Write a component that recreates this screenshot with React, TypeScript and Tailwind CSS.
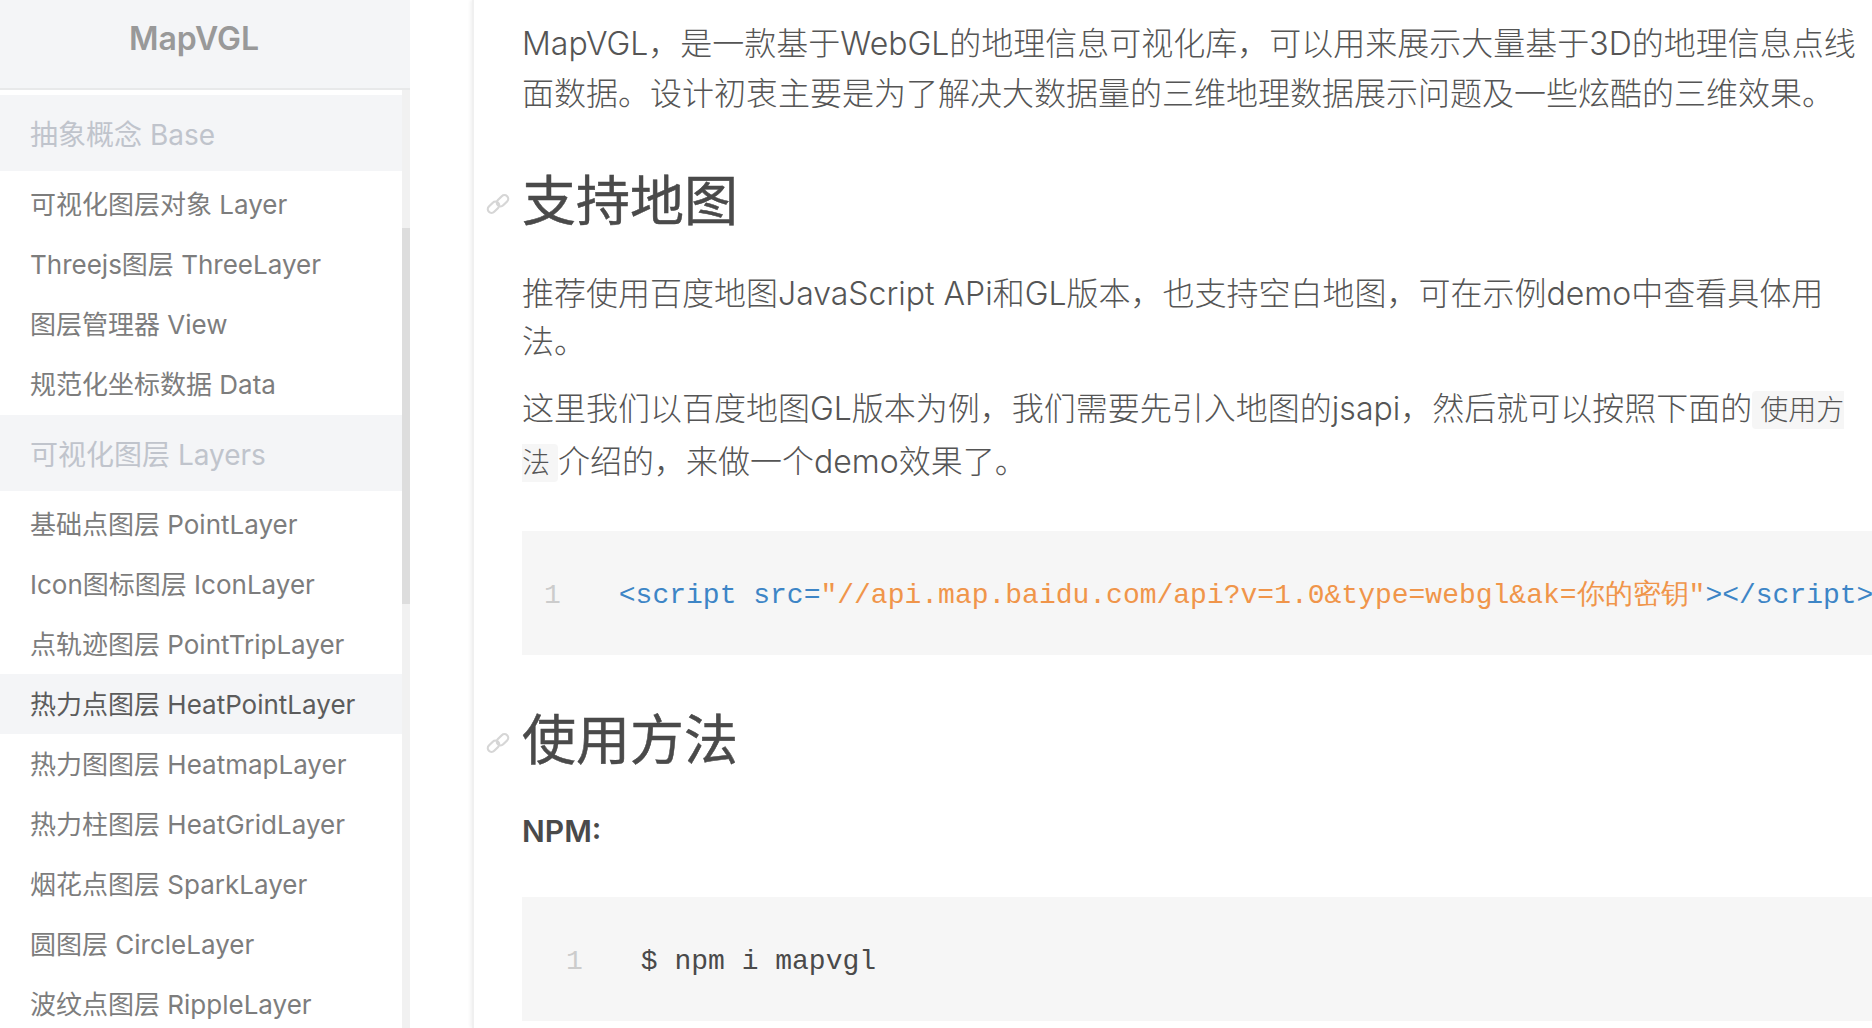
const font = { cn: "font-['Inter','Noto_Sans_CJK_SC',sans-serif]" };

const baseItems = ["可视化图层对象 Layer", "Threejs图层 ThreeLayer", "图层管理器 View", "规范化坐标数据 Data"];
const layerItems = [
  "基础点图层 PointLayer",
  "Icon图标图层 IconLayer",
  "点轨迹图层 PointTripLayer",
  "热力点图层 HeatPointLayer",
  "热力图图层 HeatmapLayer",
  "热力柱图层 HeatGridLayer",
  "烟花点图层 SparkLayer",
  "圆图层 CircleLayer",
  "波纹点图层 RippleLayer",
];

function NavGroup({ title, items, active }: { title: string; items: string[]; active?: string }) {
  return (
    <div>
      <div className="flex h-[76px] items-center bg-[#f4f5f7] pt-[4px] pl-[30px] text-[28px] text-[#c0c4cc]">{title}</div>
      <ul className="mt-[3px] mb-[1px]">
        {items.map((item) => (
          <li
            key={item}
            className={`flex h-[60px] items-center pl-[30px] text-[26px] ${
              item === active ? "bg-[#f4f5f7] text-[#5c5c5c]" : "text-[#7d7d7d]"
            }`}
          >
            {item}
          </li>
        ))}
      </ul>
    </div>
  );
}

function ChainIcon() {
  return (
    <svg viewBox="0 0 24 24" className="absolute top-[25px] left-[-36px] size-[24px] text-[#d6d6d6]" fill="none" stroke="currentColor" strokeWidth="2.2">
      <rect x="1" y="11.5" width="13" height="7.5" rx="3.75" transform="rotate(-45 7.5 15.25)" />
      <rect x="10" y="5" width="13" height="7.5" rx="3.75" transform="rotate(-45 16.5 8.75)" />
    </svg>
  );
}

function Heading({ children, className }: { children: string; className: string }) {
  return (
    <h2 className={`relative text-[54px] leading-[70px] font-normal text-[#4a4a4a] [-webkit-text-stroke:0.5px_#4a4a4a] ${className}`}>
      <ChainIcon />
      {children}
    </h2>
  );
}

function CodeBlock({ num, children, numClass }: { num: string; children: React.ReactNode; numClass: string }) {
  return (
    <pre className="flex h-[124px] items-center overflow-hidden bg-[#f6f6f6] pt-[5px] font-['Liberation_Mono','Noto_Sans_CJK_SC',monospace] text-[28px] whitespace-nowrap">
      <span className={`shrink-0 text-[#cccccc] ${numClass}`}>{num}</span>
      {children}
    </pre>
  );
}

export default function App() {
  return (
    <div className={`flex h-[1028px] overflow-hidden bg-white ${font.cn}`}>
      {/* Sidebar */}
      <aside className="flex w-[410px] shrink-0 flex-col">
        <div className="flex h-[90px] shrink-0 items-center justify-center border-b-2 border-[#e8e9ea] bg-[#f4f5f7] pr-[22px] pb-[10px] text-[32px] font-semibold text-[#999999]">
          MapVGL
        </div>
        <div className="flex min-h-0 flex-1">
          <nav className="min-w-0 flex-1 overflow-hidden pt-[5px]">
            <NavGroup title="抽象概念 Base" items={baseItems} />
            <NavGroup title="可视化图层 Layers" items={layerItems} active="热力点图层 HeatPointLayer" />
          </nav>
          <div className="w-2 shrink-0 bg-[#f1f1f1]">
            <div className="mt-[138px] h-[376px] bg-[#dddddd]" />
          </div>
        </div>
      </aside>

      {/* Content */}
      <main className="ml-[62px] min-w-0 flex-1 overflow-hidden border-l-2 border-[#f0f0f0] pl-[48px] text-[32px] font-light text-[#555555] shadow-[-2px_0_3px_#f4f4f4]">
        <p className="mt-[19px] w-[1340px] leading-[50px]">
          MapVGL，是一款基于WebGL的地理信息可视化库，可以用来展示大量基于3D的地理信息点线面数据。设计初衷主要是为了解决大数据量的三维地理数据展示问题及一些炫酷的三维效果。
        </p>
        <Heading className="mt-[48px]">支持地图</Heading>
        <p className="mt-[33px] w-[1340px] leading-[48px]">
          推荐使用百度地图JavaScript APi和GL版本，也支持空白地图，可在示例demo中查看具体用法。
        </p>
        <p className="mt-[17px] w-[1340px] leading-[52px]">
          这里我们以百度地图GL版本为例，我们需要先引入地图的jsapi，然后就可以按照下面的
          <code className="rounded-[4px] bg-[#f6f6f6] px-[8px] py-[2px] font-['Inter','Noto_Sans_CJK_SC',sans-serif] text-[28px]">
            使用方法
          </code>
          介绍的，来做一个demo效果了。
        </p>
        <div className="mt-[42px]">
          <CodeBlock num="1" numClass="ml-[22px] mr-[58px]">
            <code className="font-normal">
              <span className="text-[#3d85c6]">&lt;script src=</span>
              <span className="text-[#f0954a]">"//api.map.baidu.com/api?v=1.0&amp;type=webgl&amp;ak=你的密钥"</span>
              <span className="text-[#3d85c6]">&gt;&lt;/script&gt;</span>
            </code>
          </CodeBlock>
        </div>
        <Heading className="mt-[51px]">使用方法</Heading>
        <p className="mt-[31px] text-[30px] leading-[48px] font-semibold text-[#4a4a4a]">NPM:</p>
        <div className="mt-[42px]">
          <CodeBlock num="1" numClass="ml-[44px] mr-[58px]">
            <code className="font-normal text-[#4a4a4a]">$ npm i mapvgl</code>
          </CodeBlock>
        </div>
      </main>
    </div>
  );
}
